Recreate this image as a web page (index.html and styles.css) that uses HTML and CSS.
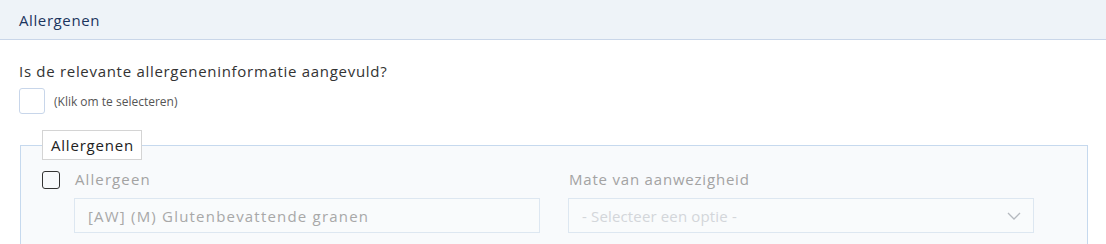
FILE: index.html
```html
<!DOCTYPE html>
<html lang="nl">
<head>
<meta charset="utf-8">
<title>Allergenen</title>
<link rel="stylesheet" href="styles.css">
</head>
<body>
<div class="panel">
  <div class="panel-header">Allergenen</div>
  <div class="panel-body">
    <div class="question">Is de relevante allergeneninformatie aangevuld?</div>
    <div class="check-row">
      <span class="big-check"></span>
      <span class="check-hint">(Klik om te selecteren)</span>
    </div>
    <fieldset class="group">
      <legend class="group-legend">Allergenen</legend>
      <div class="item-row">
        <span class="small-check"></span>
        <div class="fields">
          <div class="field">
            <div class="field-label">Allergeen</div>
            <div class="field-input">[AW] (M) Glutenbevattende granen</div>
          </div>
          <div class="field">
            <div class="field-label wide-label">Mate van aanwezigheid</div>
            <div class="field-input select">
              <span class="placeholder">- Selecteer een optie -</span>
              <svg class="chevron" width="14" height="8" viewBox="0 0 14 8"><path d="M1 1 L7 7 L13 1" fill="none" stroke="#b5b9bf" stroke-width="1.3"/></svg>
            </div>
          </div>
        </div>
      </div>
    </fieldset>
  </div>
</div>
</body>
</html>
```

FILE: styles.css
```css
* { box-sizing: border-box; }
body {
  margin: 0;
  background: #fff;
  font-family: "Open Sans", "Noto Sans", sans-serif;
  color: #333;
}
.panel-header {
  height: 40px;
  background: #eef3f8;
  border-bottom: 1px solid #c9d6e9;
  padding-left: 19px;
  display: flex;
  align-items: center;
  font-size: 15px;
  letter-spacing: 0.6px;
  color: #1c355e;
}
.panel-body {
  padding: 20px 18px 0 20px;
}
.question {
  font-size: 15px;
  letter-spacing: 0.7px;
  color: #333;
  line-height: 22px;
  margin-left: -1px;
}
.check-row {
  display: flex;
  align-items: center;
  margin-top: 6px;
  margin-left: -1px;
  gap: 9px;
}
.big-check {
  width: 26px;
  height: 26px;
  border: 1px solid #c8d6ea;
  border-radius: 3px;
  background: #fff;
}
.check-hint {
  font-size: 12px;
  color: #555;
}
.group {
  margin: 16px 0 0 0;
  border: 1px solid #c6d9ee;
  background: #f8fafc;
  padding: 8px 53px 12px 21px;
  min-width: 0;
}
.group-legend {
  margin-left: 0;
  padding: 0 7px 0 8px;
  height: 30px;
  line-height: 28px;
  border: 1px solid #d4d4d4;
  background: #fff;
  font-size: 15px;
  letter-spacing: 0.8px;
  color: #222;
}
.item-row {
  display: flex;
  align-items: flex-start;
}
.small-check {
  width: 18px;
  height: 18px;
  border: 1.5px solid #333;
  border-radius: 3px;
  margin-top: 3px;
  flex: none;
}
.fields {
  margin-left: 14px;
  display: grid;
  grid-template-columns: 466px 466px;
  column-gap: 28px;
}
.field-label {
  font-size: 15px;
  letter-spacing: 1.1px;
  color: #a3a3a3;
  line-height: 22px;
  margin-left: 1px;
  margin-bottom: 8px;
}
.wide-label {
  letter-spacing: 0.8px;
}
.field-input {
  height: 35px;
  border: 1px solid #dde7f1;
  background: #f9fbfc;
  padding: 0 13px;
  display: flex;
  align-items: center;
  font-size: 15px;
  letter-spacing: 1.2px;
  color: #a8a8a8;
}
.select {
  justify-content: space-between;
  letter-spacing: 0.15px;
  padding-right: 12px;
}
.placeholder {
  color: #d3d6da;
}
```
